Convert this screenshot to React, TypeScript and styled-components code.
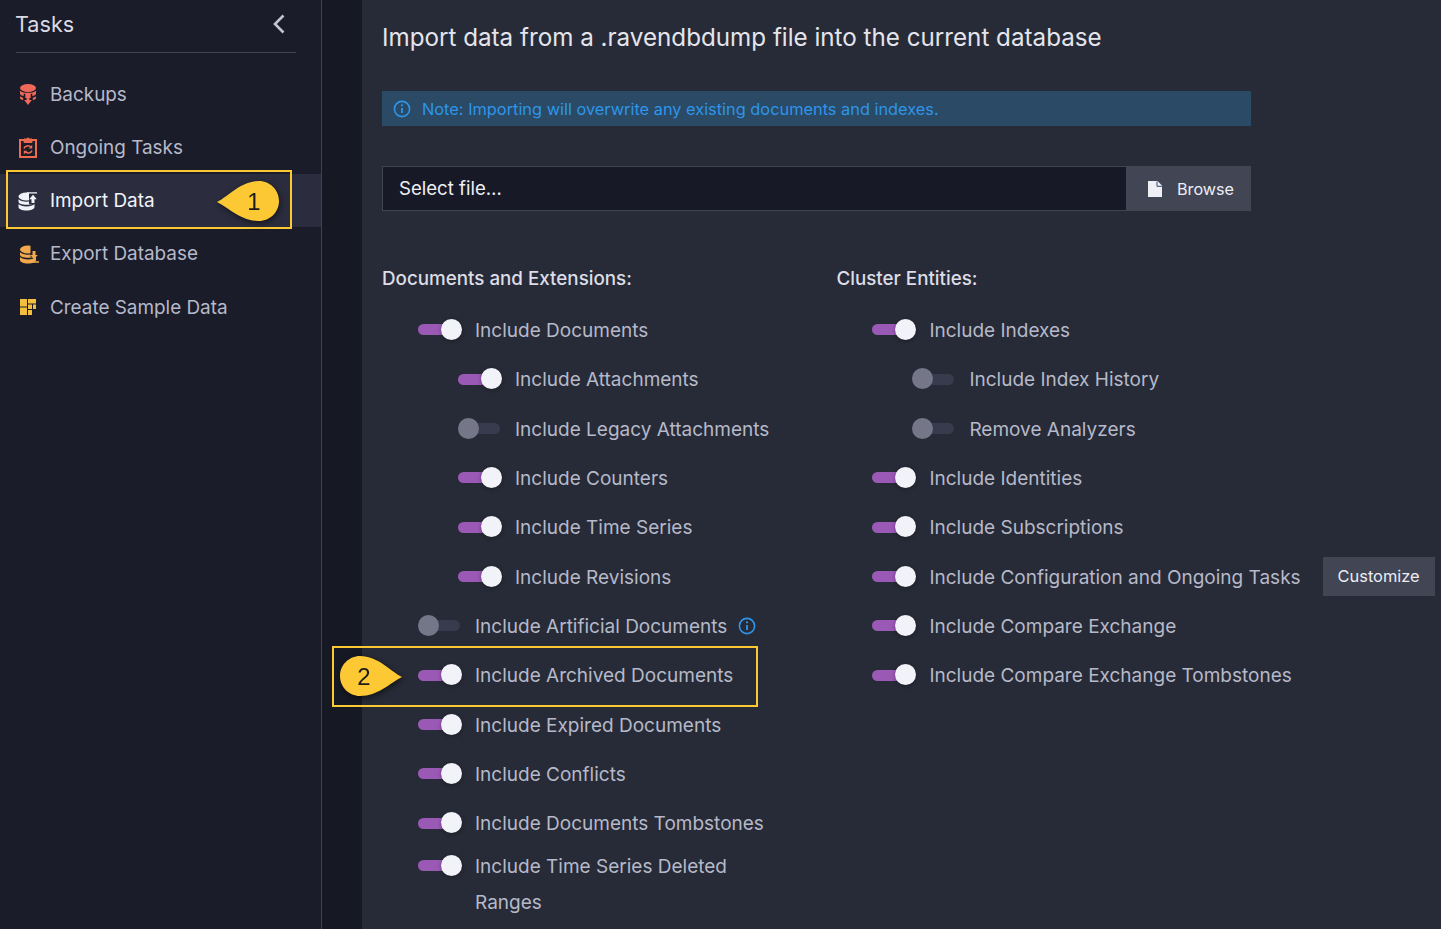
import React from "react";
import styled, { createGlobalStyle } from "styled-components";

const Global = createGlobalStyle`
  html, body { margin: 0; padding: 0; height: 100%; overflow: hidden; background: #272b37; }
  body { font-family: Inter, "Noto Sans", sans-serif; }
  #root { height: 100%; }
  * { box-sizing: border-box; }
`;

const Page = styled.div`
  position: relative;
  display: flex;
  width: 1441px;
  height: 929px;
  overflow: hidden;
  background: #272b37;
`;

const Sidebar = styled.aside`
  flex: 0 0 322px;
  background: #1a1c2a;
  border-right: 1px solid #41444f;
`;

const SideHeader = styled.div`
  display: flex;
  align-items: center;
  justify-content: space-between;
  height: 53px;
  margin: 0 25px 0 16px;
  padding: 0 10px 5px 0;
  border-bottom: 1px solid #41444f;
  color: #d9dae3;
  font-size: 21.6px;
  text-indent: -1px;
`;

const Menu = styled.nav`
  display: flex;
  flex-direction: column;
  padding-top: 14px;
`;

const MenuItem = styled.a<{ $active?: boolean }>`
  display: flex;
  align-items: center;
  gap: 10px;
  height: 53.25px;
  padding: 1px 0 0 18px;
  font-size: 18.9px;
  color: ${(p) => (p.$active ? "#f2f3f8" : "#b6b9c9")};
  background: ${(p) => (p.$active ? "#2b2d3e" : "transparent")};
`;

const Strip = styled.div`
  flex: 0 0 40px;
  background: #161824;
`;

const Content = styled.main`
  flex: 1;
  padding: 20px 0 0 20px;
`;

const Title = styled.h1`
  margin: 0 0 35px;
  font-size: 24.2px;
  line-height: 36px;
  font-weight: 400;
  color: #e4e5ec;
`;

const Note = styled.div`
  display: flex;
  align-items: center;
  gap: 11px;
  width: 869px;
  height: 35px;
  padding-left: 11px;
  background: #2a4a65;
  color: #2f95ea;
  font-size: 16.35px;
`;

const FileRow = styled.div`
  display: flex;
  width: 869px;
  height: 45px;
  margin: 40px 0 56px;
`;

const FileInput = styled.div`
  flex: 1;
  display: flex;
  align-items: center;
  padding: 0 0 1px 16px;
  background: #181926;
  border: 1px solid #41444f;
  border-right: 0;
  color: #eff0f5;
  font-size: 18.6px;
`;

const Button = styled.button`
  display: flex;
  align-items: center;
  border: 0;
  background: #424554;
  color: #eceef4;
  font-family: inherit;
  font-size: 16.4px;
`;

const BrowseButton = styled(Button)`
  flex: 0 0 125px;
  gap: 15px;
  padding-left: 22px;
  font-size: 16.2px;
`;

const CustomizeButton = styled(Button)`
  justify-content: center;
  flex: 0 0 112px;
  height: 39px;
  margin: -3px 0 0 22px;
`;

const Columns = styled.div`
  display: grid;
  grid-template-columns: 454.4px 1fr;
`;

const Heading = styled.h2`
  margin: 0 0 15.3px;
  font-size: 18.8px;
  line-height: 24px;
  font-weight: 500;
  color: #dcdde6;
`;

const Row = styled.div<{ $level: number; $tight?: boolean }>`
  display: flex;
  align-items: flex-start;
  min-height: 49.33px;
  padding: ${(p) => (p.$tight ? 0 : "6.67px")} 0 0 ${(p) => 36 + (p.$level - 1) * 40}px;
`;

const Track = styled.span<{ $on: boolean }>`
  position: relative;
  flex: 0 0 44px;
  height: 36px;
  margin-right: 13px;
  &::before {
    content: "";
    position: absolute;
    left: 0;
    top: 11.5px;
    width: ${(p) => (p.$on ? "30px" : "42px")};
    height: 11px;
    border-radius: 6px;
    background: ${(p) => (p.$on ? "#9b59b6" : "#383a4d")};
  }
  &::after {
    content: "";
    position: absolute;
    left: ${(p) => (p.$on ? "23px" : "0")};
    top: 6px;
    width: 21px;
    height: 21px;
    border-radius: 50%;
    background: ${(p) => (p.$on ? "#f2f3f8" : "#757789")};
    box-shadow: ${(p) => (p.$on ? "0 1px 4px rgba(0,0,0,.35)" : "none")};
  }
`;

const Label = styled.span`
  max-width: 300px;
  font-size: 19px;
  line-height: 36px;
  color: #b6b9c9;
`;

const WideLabel = styled(Label)`
  max-width: none;
  white-space: nowrap;
`;

const InfoMark = styled.span`
  display: inline-flex;
  margin: 8px 0 0 11px;
  color: #2f95ea;
`;

const Highlight = styled.div<{ $x: number; $y: number; $w: number; $h: number }>`
  position: absolute;
  left: ${(p) => p.$x}px;
  top: ${(p) => p.$y}px;
  width: ${(p) => p.$w}px;
  height: ${(p) => p.$h}px;
  border: 2px solid #fcc934;
  pointer-events: none;
`;

const Callout = styled.div<{ $x: number; $y: number }>`
  position: absolute;
  left: ${(p) => p.$x}px;
  top: ${(p) => p.$y}px;
  width: 62px;
  height: 40px;
  filter: drop-shadow(1px 2px 3px rgba(0, 0, 0, 0.55));
`;

const CalloutNum = styled.span<{ $left: number }>`
  position: absolute;
  left: ${(p) => p.$left}px;
  top: 0;
  width: 20px;
  text-align: center;
  font-family: "Liberation Sans", Arial, sans-serif;
  font-size: 24px;
  line-height: 41px;
  color: #1a1a1a;
`;

const Shape = styled.svg`
  display: block;
`;

const Info = ({ size = 18 }: { size?: number }) => (
  <svg width={size} height={size} viewBox="0 0 18 18" fill="none" stroke="currentColor">
    <circle cx="9" cy="9" r="7.6" strokeWidth="1.6" />
    <path d="M9 8v5" strokeWidth="1.8" />
    <circle cx="9" cy="5.3" r="1.1" fill="currentColor" stroke="none" />
  </svg>
);

const Chevron = () => (
  <svg width="14" height="20" viewBox="0 0 14 20" fill="none" stroke="#c3c5d2" strokeWidth="2.6">
    <path d="M11.5 1.5L3 10l8.5 8.5" />
  </svg>
);

const Icon = styled.svg`
  flex: 0 0 22px;
  width: 22px;
  height: 22px;
`;

const IconBackups = () => (
  <Icon viewBox="0 0 22 22" fill="#f0685a">
    <ellipse cx="10" cy="5" rx="8" ry="4" />
    <path d="M2 7.500C3.500 9.300 6.600 10 10 10s6.500-.7 8-2.500V11c-.8 1.200-2.200 1.800-3.700 2.100v-2.300h-1.600v4.200H7.300v-4.200H5.700v2.300C4.200 12.800 2.800 12.200 2 11z" />
    <path d="M2 13.200c.8.700 2 1.200 3.200 1.500v2.300H5c-1.600-.4-3-1.100-3-2zM18 13.200c-.8.700-2 1.200-3.200 1.500v2.300h.2c1.600-.4 3-1.100 3-2z" />
    <path d="M8.600 9.800h2.800V17h2.400L10 22l-3.800-5h2.400z" />
  </Icon>
);

const IconTasks = () => (
  <Icon viewBox="0 0 22 22" fill="none" stroke="#ee6b4e" strokeWidth="2">
    <rect x="2" y="4" width="16" height="17" />
    <path d="M6 6.500V3h2.600a1.500 1.500 0 0 1 2.800 0H14v3.500z" fill="#ee6b4e" strokeWidth="1" />
    <path d="M6 12.500c.6-2.800 5-3.600 7-1.200M14 14.500c-.7 2.700-5 3.400-7 1.100" strokeWidth="1.500" />
    <path d="M14.200 8.800v3.600h-3.600zM5.800 18.400v-3.600h3.600z" fill="#ee6b4e" stroke="none" />
  </Icon>
);

const Stack = ({ x, color, bg }: { x: number; color: string; bg: string }) => (
  <g fill={color}>
    <ellipse cx={x} cy="6.500" rx="8" ry="4" />
    <path
      d={`M${x - 8} 9c1.400 1.500 4.600 2.500 8 2.500s6.600-1 8-2.500v2.500c0 1.700-3.600 3-8 3s-8-1.300-8-3z`}
      transform="translate(0 0.300)"
    />
    <path d={`M${x - 8} 14c1.400 1.500 4.600 2.500 8 2.500s6.600-1 8-2.500v3c0 2-3.600 3.500-8 3.500s-8-1.500-8-3.500z`} />
    <rect x={x + 2.500} y="1" width="10" height="13" fill={bg} />
  </g>
);

const IconImport = () => (
  <Icon viewBox="0 0 22 22">
    <Stack x={8.500} color="#f2f3f8" bg="#2b2d3e" />
    <path d="M9 2.200h10v1.300H9zM15 4.800l3.800 4.400h-2.300V13h-3V9.200h-2.300z" fill="#f2f3f8" />
  </Icon>
);

const IconExport = () => (
  <Icon viewBox="0 0 22 22">
    <Stack x={10} color="#f2a94e" bg="#1a1c2a" />
    <path d="M14.500 8h3v4h2.300L16 16.200 12.200 12h2.300zM10.500 18.200H21v1.500H10.500z" fill="#f2a94e" />
  </Icon>
);

const IconSample = () => (
  <Icon viewBox="0 0 22 22" fill="#f2bf3f">
    <path d="M2 3h7v7.500H2zM2 11.500h7V19H2zM10 3h8v4.500h-8zM10 8.500h4V13h-4zM15 8.500h3V13h-3zM10 14h4v5h-4z" />
  </Icon>
);

const FileIcon = () => (
  <svg width="14" height="16" viewBox="0 0 14 16">
    <path d="M0 0h9.500L14 4.500V16H0z" fill="#eef0f6" />
    <path d="M9 0.500v4.800h4.800" fill="none" stroke="#2f4a78" strokeWidth="1" />
  </svg>
);

type Option = { label: string; level: number; on: boolean; info?: boolean; tight?: boolean; customize?: boolean };

const leftOptions: Option[] = [
  { label: "Include Documents", level: 1, on: true },
  { label: "Include Attachments", level: 2, on: true },
  { label: "Include Legacy Attachments", level: 2, on: false },
  { label: "Include Counters", level: 2, on: true },
  { label: "Include Time Series", level: 2, on: true },
  { label: "Include Revisions", level: 2, on: true },
  { label: "Include Artificial Documents", level: 1, on: false, info: true },
  { label: "Include Archived Documents", level: 1, on: true },
  { label: "Include Expired Documents", level: 1, on: true },
  { label: "Include Conflicts", level: 1, on: true },
  { label: "Include Documents Tombstones", level: 1, on: true },
  { label: "Include Time Series Deleted Ranges", level: 1, on: true, tight: true },
];

const rightOptions: Option[] = [
  { label: "Include Indexes", level: 1, on: true },
  { label: "Include Index History", level: 2, on: false },
  { label: "Remove Analyzers", level: 2, on: false },
  { label: "Include Identities", level: 1, on: true },
  { label: "Include Subscriptions", level: 1, on: true },
  { label: "Include Configuration and Ongoing Tasks", level: 1, on: true, customize: true },
  { label: "Include Compare Exchange", level: 1, on: true },
  { label: "Include Compare Exchange Tombstones", level: 1, on: true },
];

const OptionRow = ({ o, wide }: { o: Option; wide?: boolean }) => (
  <Row $level={o.level} $tight={o.tight}>
    <Track $on={o.on} />
    {wide ? <WideLabel>{o.label}</WideLabel> : <Label>{o.label}</Label>}
    {o.info && (
      <InfoMark>
        <Info />
      </InfoMark>
    )}
    {o.customize && <CustomizeButton>Customize</CustomizeButton>}
  </Row>
);

export default function App() {
  return (
    <Page>
      <Global />
      <Sidebar>
        <SideHeader>
          Tasks
          <Chevron />
        </SideHeader>
        <Menu>
          <MenuItem><IconBackups />Backups</MenuItem>
          <MenuItem><IconTasks />Ongoing Tasks</MenuItem>
          <MenuItem $active><IconImport />Import Data</MenuItem>
          <MenuItem><IconExport />Export Database</MenuItem>
          <MenuItem><IconSample />Create Sample Data</MenuItem>
        </Menu>
      </Sidebar>
      <Strip />
      <Content>
        <Title>Import data from a .ravendbdump file into the current database</Title>
        <Note>
          <Info />
          Note: Importing will overwrite any existing documents and indexes.
        </Note>
        <FileRow>
          <FileInput>Select file…</FileInput>
          <BrowseButton>
            <FileIcon />
            Browse
          </BrowseButton>
        </FileRow>
        <Columns>
          <div>
            <Heading>Documents and Extensions:</Heading>
            {leftOptions.map((o) => (
              <OptionRow key={o.label} o={o} />
            ))}
          </div>
          <div>
            <Heading>Cluster Entities:</Heading>
            {rightOptions.map((o) => (
              <OptionRow key={o.label} o={o} wide />
            ))}
          </div>
        </Columns>
      </Content>

      <Highlight $x={6} $y={170} $w={286} $h={59} />
      <Highlight $x={332} $y={646} $w={426} $h={61} />
      <Callout $x={217} $y={181}>
        <Shape width="62" height="40" viewBox="0 0 62 40">
          <path d="M0 21C12 15 24 0 42 0c11 0 20 9 20 20s-9 20-20 20C24 40 12 27 0 21z" fill="#fcc934" />
        </Shape>
        <CalloutNum $left={27}>1</CalloutNum>
      </Callout>
      <Callout $x={340} $y={656}>
        <Shape width="62" height="40" viewBox="0 0 62 40">
          <path d="M62 21C50 15 38 0 20 0 9 0 0 9 0 20s9 20 20 20c18 0 30-13 42-19z" fill="#fcc934" />
        </Shape>
        <CalloutNum $left={14}>2</CalloutNum>
      </Callout>
    </Page>
  );
}
